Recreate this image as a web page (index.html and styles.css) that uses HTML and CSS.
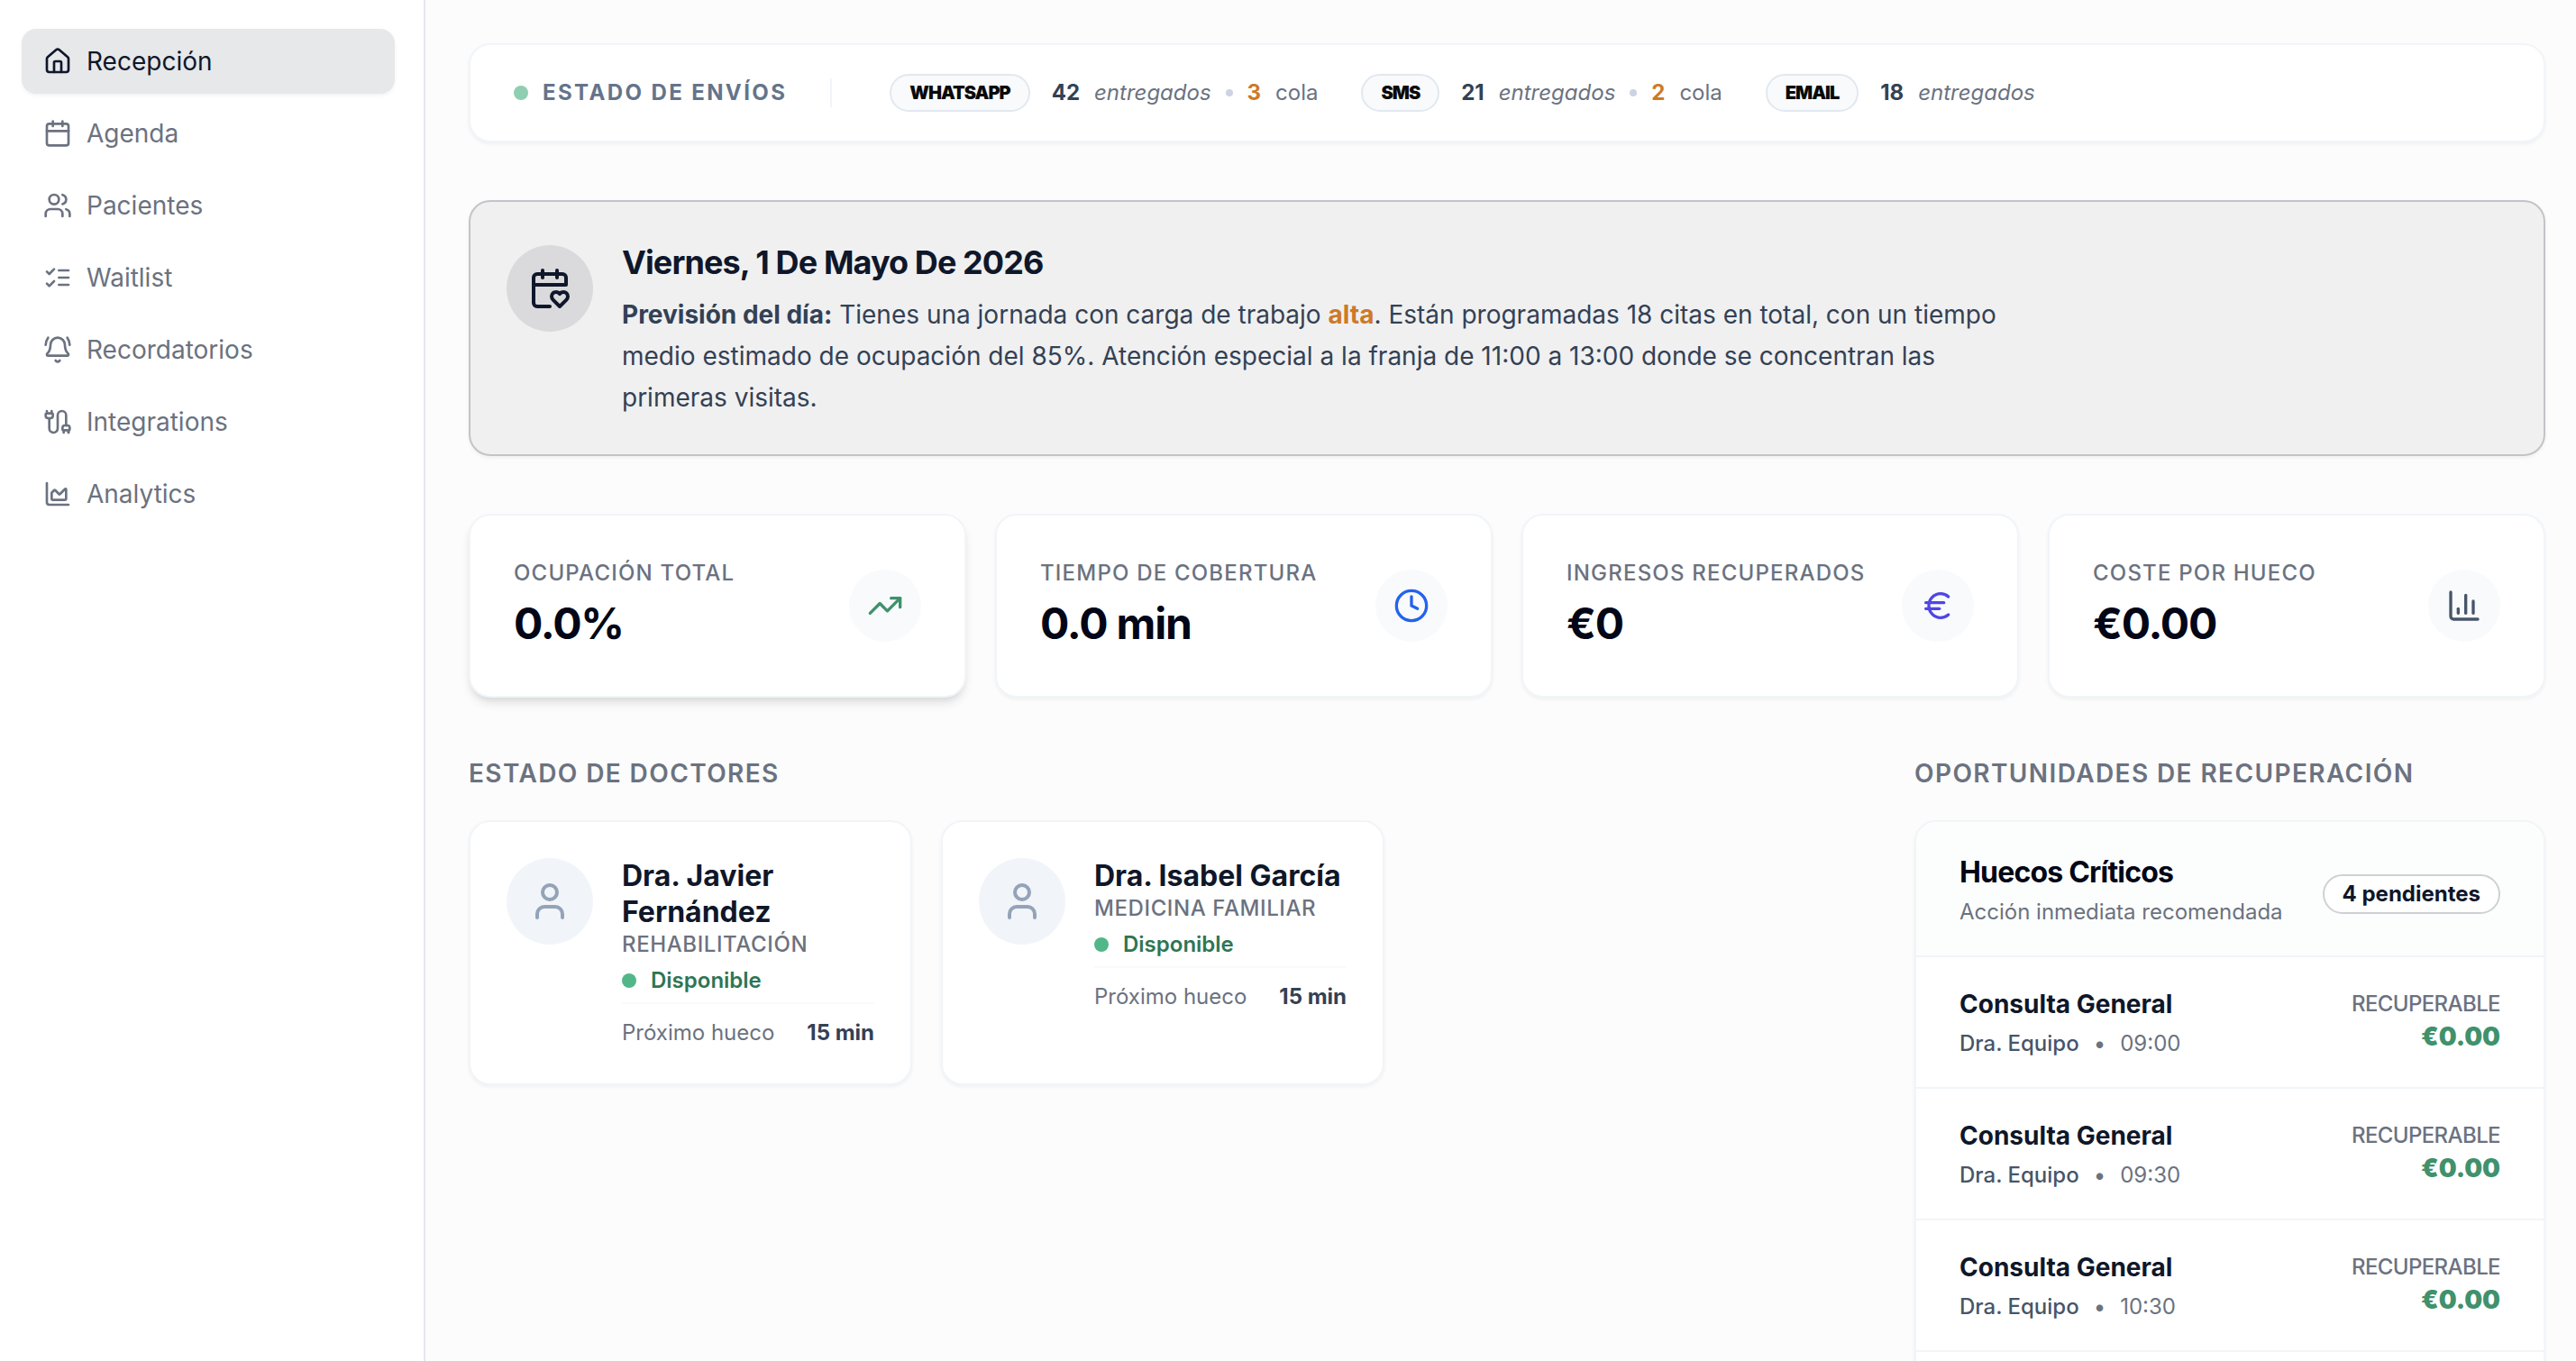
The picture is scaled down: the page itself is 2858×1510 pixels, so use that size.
FILE: index.html
```html
<!DOCTYPE html>
<html lang="es">
<head>
<meta charset="utf-8">
<meta name="viewport" content="width=device-width, initial-scale=1">
<title>Recepción</title>
<link rel="stylesheet" href="styles.css">
</head>
<body>
<div class="app">
  <nav class="sidebar" aria-label="Principal">
    <a class="nav-item active" href="#recepcion" aria-current="page">
      <svg class="icon" viewBox="0 0 24 24"><path d="M15 21v-8a1 1 0 0 0-1-1h-4a1 1 0 0 0-1 1v8"/><path d="M3 10a2 2 0 0 1 .709-1.528l7-5.999a2 2 0 0 1 2.582 0l7 5.999A2 2 0 0 1 21 10v9a2 2 0 0 1-2 2H5a2 2 0 0 1-2-2z"/></svg>
      <span>Recepción</span>
    </a>
    <a class="nav-item" href="#agenda">
      <svg class="icon" viewBox="0 0 24 24"><path d="M8 2v4"/><path d="M16 2v4"/><rect width="18" height="18" x="3" y="4" rx="2"/><path d="M3 10h18"/></svg>
      <span>Agenda</span>
    </a>
    <a class="nav-item" href="#pacientes">
      <svg class="icon" viewBox="0 0 24 24"><path d="M16 21v-2a4 4 0 0 0-4-4H6a4 4 0 0 0-4 4v2"/><circle cx="9" cy="7" r="4"/><path d="M22 21v-2a4 4 0 0 0-3-3.87"/><path d="M16 3.13a4 4 0 0 1 0 7.75"/></svg>
      <span>Pacientes</span>
    </a>
    <a class="nav-item" href="#waitlist">
      <svg class="icon" viewBox="0 0 24 24"><path d="m3 17 2 2 4-4"/><path d="m3 7 2 2 4-4"/><path d="M13 6h8"/><path d="M13 12h8"/><path d="M13 18h8"/></svg>
      <span>Waitlist</span>
    </a>
    <a class="nav-item" href="#recordatorios">
      <svg class="icon" viewBox="0 0 24 24"><path d="M10.268 21a2 2 0 0 0 3.464 0"/><path d="M22 8c0-2.3-.8-4.3-2-6"/><path d="M3.262 15.326A1 1 0 0 0 4 17h16a1 1 0 0 0 .74-1.673C19.41 13.956 18 12.499 18 8A6 6 0 0 0 6 8c0 4.499-1.411 5.956-2.738 7.326"/><path d="M4 2C2.8 3.7 2 5.7 2 8"/></svg>
      <span>Recordatorios</span>
    </a>
    <a class="nav-item" href="#integrations">
      <svg class="icon" viewBox="0 0 24 24"><path d="M17 21v-2a1 1 0 0 1-1-1v-1a2 2 0 0 1 2-2h2a2 2 0 0 1 2 2v1a1 1 0 0 1-1 1v2"/><path d="M19 15V6.5a1 1 0 0 0-7 0v11a1 1 0 0 1-7 0V9"/><path d="M21 21v-2h-4"/><path d="M3 5h4V3"/><path d="M7 5a1 1 0 0 1 1 1v1a2 2 0 0 1-2 2H4a2 2 0 0 1-2-2V6a1 1 0 0 1 1-1V3"/></svg>
      <span>Integrations</span>
    </a>
    <a class="nav-item" href="#analytics">
      <svg class="icon" viewBox="0 0 24 24"><path d="M3 3v16a2 2 0 0 0 2 2h16"/><path d="M7 11.207a.5.5 0 0 1 .146-.353l2-2a.5.5 0 0 1 .708 0l3.292 3.292a.5.5 0 0 0 .708 0l4.292-4.292a.5.5 0 0 1 .854.353V16a1 1 0 0 1-1 1H8a1 1 0 0 1-1-1z"/></svg>
      <span>Analytics</span>
    </a>
  </nav>

  <main class="main">
    <section class="card status">
      <div class="status-title"><span class="dot pulse"></span><h2>Estado de envíos</h2></div>
      <div class="status-list">
        <div class="channel">
          <span class="pill">WHATSAPP</span>
          <span class="sent"><strong>42</strong><em>entregados</em></span><span class="sep"></span><span class="queued"><strong>3</strong><span>cola</span></span>
        </div>
        <div class="channel">
          <span class="pill">SMS</span>
          <span class="sent"><strong>21</strong><em>entregados</em></span><span class="sep"></span><span class="queued"><strong>2</strong><span>cola</span></span>
        </div>
        <div class="channel">
          <span class="pill">EMAIL</span>
          <span class="sent"><strong>18</strong><em>entregados</em></span>
        </div>
      </div>
    </section>

    <section class="card banner">
      <div class="banner-icon"><svg class="icon icon-lg" viewBox="0 0 24 24"><path d="M3 10h18V6a2 2 0 0 0-2-2H5a2 2 0 0 0-2 2v14a2 2 0 0 0 2 2h7"/><path d="M8 2v4"/><path d="M16 2v4"/><path d="M21.29 14.7a2.43 2.43 0 0 0-2.65-.52c-.3.12-.57.3-.8.53l-.34.34-.35-.34a2.43 2.43 0 0 0-2.65-.53c-.3.12-.56.3-.79.53-.95.94-1 2.53.2 3.74L17.5 22l3.6-3.55c1.2-1.21 1.14-2.8.19-3.74Z"/></svg></div>
      <div>
        <h1>Viernes, 1 De Mayo De 2026</h1>
        <p><strong>Previsión del día:</strong> Tienes una jornada con carga de trabajo <b class="load">alta</b>. Están programadas 18 citas en total, con un tiempo medio estimado de ocupación del 85%. Atención especial a la franja de 11:00 a 13:00 donde se concentran las primeras visitas.</p>
      </div>
    </section>

    <section class="stats">
      <article class="card stat raised">
        <div><h3>Ocupación total</h3><p>0.0%</p></div>
        <div class="stat-icon green"><svg class="icon icon-md" viewBox="0 0 24 24"><path d="M16 7h6v6"/><path d="m22 7-8.5 8.5-5-5L2 17"/></svg></div>
      </article>
      <article class="card stat">
        <div><h3>Tiempo de cobertura</h3><p>0.0 min</p></div>
        <div class="stat-icon blue"><svg class="icon icon-md" viewBox="0 0 24 24"><circle cx="12" cy="12" r="10"/><path d="M12 6v6l4 2"/></svg></div>
      </article>
      <article class="card stat">
        <div><h3>Ingresos recuperados</h3><p>€0</p></div>
        <div class="stat-icon indigo"><svg class="icon icon-md" viewBox="0 0 24 24"><path d="M4 10h12"/><path d="M4 14h9"/><path d="M19 6a7.7 7.7 0 0 0-5.2-2A7.9 7.9 0 0 0 6 12c0 4.4 3.5 8 7.8 8 2 0 3.8-.8 5.2-2"/></svg></div>
      </article>
      <article class="card stat">
        <div><h3>Coste por hueco</h3><p>€0.00</p></div>
        <div class="stat-icon slate"><svg class="icon icon-md" viewBox="0 0 24 24"><path d="M3 3v16a2 2 0 0 0 2 2h16"/><path d="M18 17V9"/><path d="M13 17V5"/><path d="M8 17v-3"/></svg></div>
      </article>
    </section>

    <div class="columns">
      <section class="column">
        <h2 class="heading">Estado de doctores</h2>
        <div class="doctors">
          <article class="card doctor">
            <div class="avatar"><svg class="icon icon-lg" viewBox="0 0 24 24"><path d="M19 21v-2a4 4 0 0 0-4-4H9a4 4 0 0 0-4 4v2"/><circle cx="12" cy="7" r="4"/></svg></div>
            <div class="doctor-info">
              <h3>Dra. Javier Fernández</h3>
              <p class="specialty">Rehabilitación</p>
              <p class="available"><span class="dot"></span>Disponible</p>
              <p class="next"><span>Próximo hueco</span><strong>15 min</strong></p>
            </div>
          </article>
          <article class="card doctor">
            <div class="avatar"><svg class="icon icon-lg" viewBox="0 0 24 24"><path d="M19 21v-2a4 4 0 0 0-4-4H9a4 4 0 0 0-4 4v2"/><circle cx="12" cy="7" r="4"/></svg></div>
            <div class="doctor-info">
              <h3>Dra. Isabel García</h3>
              <p class="specialty">Medicina familiar</p>
              <p class="available"><span class="dot"></span>Disponible</p>
              <p class="next"><span>Próximo hueco</span><strong>15 min</strong></p>
            </div>
          </article>
        </div>
      </section>

      <section class="column">
        <h2 class="heading">Oportunidades de recuperación</h2>
        <div class="card gaps">
          <header class="gaps-head">
            <div><h3>Huecos Críticos</h3><p>Acción inmediata recomendada</p></div>
            <span class="badge">4 pendientes</span>
          </header>
          <ul>
            <li><div><h4>Consulta General</h4><p class="meta"><span class="who">Dra. Equipo</span><span>•</span><time>09:00</time></p></div><div class="amount"><span>Recuperable</span><strong>€0.00</strong></div></li>
            <li><div><h4>Consulta General</h4><p class="meta"><span class="who">Dra. Equipo</span><span>•</span><time>09:30</time></p></div><div class="amount"><span>Recuperable</span><strong>€0.00</strong></div></li>
            <li><div><h4>Consulta General</h4><p class="meta"><span class="who">Dra. Equipo</span><span>•</span><time>10:30</time></p></div><div class="amount"><span>Recuperable</span><strong>€0.00</strong></div></li>
            <li><div><h4>Consulta General</h4><p class="meta"><span class="who">Dra. Equipo</span><span>•</span><time>11:00</time></p></div><div class="amount"><span>Recuperable</span><strong>€0.00</strong></div></li>
          </ul>
        </div>
      </section>
    </div>
  </main>
</div>
</body>
</html>
```
FILE: styles.css
```css
* { box-sizing: border-box; margin: 0; padding: 0; }

body {
  font-family: Inter, "Liberation Sans", sans-serif;
  font-size: 24px;
  line-height: 32px;
  color: #6b7280;
  background: #fcfcfc;
}

ul { list-style: none; }

.app { display: flex; height: 100vh; }

.icon {
  width: 32px;
  height: 32px;
  flex: none;
  fill: none;
  stroke: currentColor;
  stroke-width: 2;
  stroke-linecap: round;
  stroke-linejoin: round;
}
.icon-md { width: 40px; height: 40px; }
.icon-lg { width: 48px; height: 48px; }

/* Sidebar */
.sidebar {
  width: 472px;
  flex: none;
  display: flex;
  flex-direction: column;
  gap: 8px;
  padding: 32px 32px 32px 24px;
  background: #fff;
  border-right: 2px solid #e5e7eb;
}
.nav-item {
  display: flex;
  align-items: center;
  gap: 16px;
  height: 72px;
  padding: 0 24px;
  border-radius: 16px;
  font-size: 28px;
  color: #6b7280;
  text-decoration: none;
}
.nav-item.active {
  color: #0f172a;
  background: #e6e8ea;
  box-shadow: 0 2px 4px rgba(0, 0, 0, 0.05);
}

/* Main area */
.main {
  flex: 1;
  min-width: 0;
  display: flex;
  flex-direction: column;
  gap: 64px;
  padding: 48px 34px 48px 48px;
  overflow-y: auto;
  scrollbar-width: none;
}
.main > * { flex: none; }

.card {
  background: #fff;
  border: 2px solid #f1f5f9;
  border-radius: 24px;
  box-shadow: 0 2px 4px rgba(0, 0, 0, 0.05);
}
.dot {
  width: 16px;
  height: 16px;
  flex: none;
  border-radius: 50%;
  background: #52b788;
}
.dot.pulse { background: #8fceb0; }

/* Message delivery */
.status { display: flex; align-items: center; padding: 32px 48px; }
.status-title {
  display: flex;
  align-items: center;
  gap: 16px;
  padding-right: 48px;
  border-right: 2px solid #f1f5f9;
}
.status-title h2 {
  font-size: 24px;
  font-weight: 700;
  letter-spacing: 0.1em;
  text-transform: uppercase;
  color: #64748b;
}
.status-list { display: flex; gap: 48px; padding-left: 64px; }
.channel { display: flex; align-items: center; }
.channel strong { font-weight: 700; color: #334155; }
.pill {
  height: 42px;
  padding: 0 20px;
  margin-right: 24px;
  border: 2px solid #e2e8f0;
  border-radius: 21px;
  background: #f8fafc;
  font-size: 20px;
  line-height: 38px;
  font-weight: 900;
  letter-spacing: -0.05em;
  color: #0a0a0a;
}
.sent, .queued { display: flex; gap: 16px; }
.sep {
  width: 8px;
  height: 8px;
  margin: 0 16px;
  border-radius: 50%;
  background: #cbd5e1;
}
.channel .queued strong { color: #cc7a29; }

/* Day forecast */
.banner {
  display: flex;
  gap: 32px;
  padding: 40px;
  background: #f0f0f0;
  border-color: #c3c4c9;
}
.banner-icon {
  width: 96px;
  height: 96px;
  flex: none;
  display: grid;
  place-items: center;
  margin-top: 8px;
  border-radius: 50%;
  color: #0f172a;
  background: #dadadc;
}
.banner h1 {
  font-size: 36px;
  line-height: 54px;
  font-weight: 700;
  letter-spacing: -0.025em;
  color: #0f172a;
}
.banner p {
  max-width: 1536px;
  margin-top: 8px;
  font-size: 28px;
  line-height: 46px;
  color: #334155;
}
.banner p strong { font-weight: 700; }
.load { font-weight: 700; color: #cc7a29; }

/* Key figures */
.stats { display: grid; grid-template-columns: repeat(4, 1fr); gap: 32px; }
.stat {
  display: flex;
  align-items: center;
  justify-content: space-between;
  padding: 48px;
}
.stat.raised { box-shadow: 0 8px 12px -2px rgba(0, 0, 0, 0.1), 0 4px 8px -4px rgba(0, 0, 0, 0.1); }
.stat h3 {
  font-size: 24px;
  line-height: 32px;
  font-weight: 500;
  letter-spacing: 0.05em;
  text-transform: uppercase;
}
.stat p {
  margin-top: 8px;
  font-size: 48px;
  line-height: 64px;
  font-weight: 700;
  letter-spacing: -0.025em;
  color: #020617;
}
.stat-icon {
  width: 80px;
  height: 80px;
  flex: none;
  display: grid;
  place-items: center;
  border-radius: 50%;
  background: #f8fafc;
}
.green { color: #40916c; }
.blue { color: #2563eb; }
.indigo { color: #4f46e5; }
.slate { color: #475569; }

/* Doctors and opportunities */
.columns { display: grid; grid-template-columns: 11fr 5fr; gap: 64px; align-items: start; }
.column { display: flex; flex-direction: column; gap: 32px; min-width: 0; }
.heading {
  font-size: 28px;
  line-height: 40px;
  font-weight: 600;
  letter-spacing: 0.05em;
  text-transform: uppercase;
}
.doctors { display: grid; grid-template-columns: repeat(3, 1fr); gap: 32px; }
.doctor { display: flex; gap: 32px; padding: 40px; }
.avatar {
  width: 96px;
  height: 96px;
  flex: none;
  display: grid;
  place-items: center;
  border-radius: 50%;
  color: #94a3b8;
  background: #f1f5f9;
}
.doctor-info { flex: 1; min-width: 0; }
.doctor h3 { font-size: 32px; line-height: 40px; font-weight: 700; color: #0f172a; }
.specialty { text-transform: uppercase; font-weight: 500; letter-spacing: 0.025em; }
.available {
  display: flex;
  align-items: center;
  gap: 16px;
  margin: 8px 0;
  font-weight: 600;
  color: #2f7553;
}
.next {
  display: flex;
  justify-content: space-between;
  padding-top: 16px;
  border-top: 2px solid #f8fafc;
}
.next strong { font-weight: 700; color: #334155; }

.gaps { overflow: hidden; }
.gaps-head {
  display: flex;
  align-items: center;
  justify-content: space-between;
  padding: 32px 48px;
  background: #fcfefd;
}
.gaps-head h3 {
  font-size: 32px;
  line-height: 48px;
  font-weight: 700;
  letter-spacing: -0.025em;
  color: #020617;
}
.gaps-head p { margin-top: 4px; }
.badge {
  margin-top: 12px;
  padding: 4px 20px;
  border: 2px solid #cfd0d3;
  border-radius: 22px;
  background: #fff;
  font-weight: 700;
  color: #0f172a;
}
.gaps li {
  display: flex;
  align-items: center;
  justify-content: space-between;
  padding: 32px 48px;
  border-top: 2px solid #f1f5f9;
}
.gaps h4 { font-size: 28px; line-height: 40px; font-weight: 700; color: #0f172a; }
.meta { display: flex; gap: 16px; margin-top: 8px; }
.who { font-weight: 500; color: #475569; }
.amount { display: flex; flex-direction: column; align-items: flex-end; }
.amount span { text-transform: uppercase; font-weight: 500; letter-spacing: -0.025em; }
.amount strong { font-size: 28px; line-height: 40px; font-weight: 900; color: #40916c; }
```
